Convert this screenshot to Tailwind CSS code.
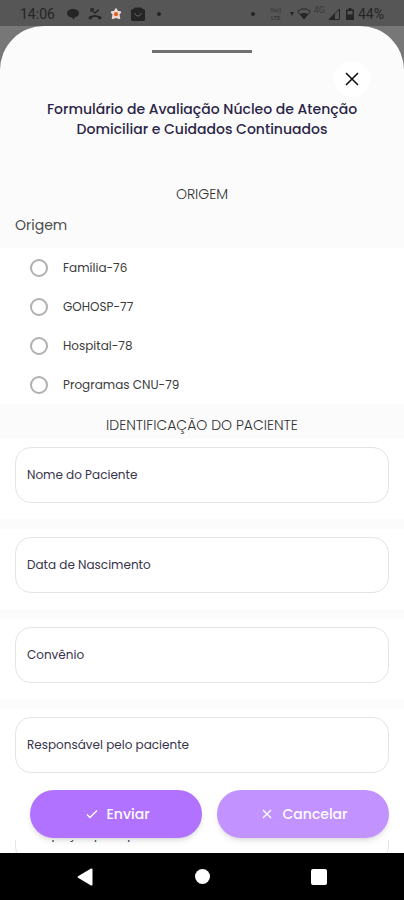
<!DOCTYPE html>
<html lang="pt-BR">
<head>
  <meta charset="UTF-8" />
  <meta name="viewport" content="width=device-width, initial-scale=1.0"/>
  <title>Formulário de Avaliação</title>
  <script src="https://cdn.jsdelivr.net/npm/@tailwindcss/browser@4"></script>
</head>
<body class="bg-[#777777] font-['Poppins','Inter',sans-serif]">
  <div class="flex flex-col h-screen overflow-hidden">

    <!-- Status bar -->
    <header class="flex items-center justify-between h-[26px] shrink-0 bg-[#565656] px-5 pt-px text-[#252525] font-['Roboto',sans-serif]">
      <div class="flex items-center">
        <span class="text-sm w-9">14:06</span>
        <svg class="w-3 h-3 ml-[11px]" viewBox="0 0 12 12" fill="currentColor"><path d="M6 1c3.400 0 6 1.700 6 4.200 0 2-1.800 3.500-4 4L6.500 11.500 5 9.400C2 9.200 0 7.500 0 5.200 0 2.700 2.600 1 6 1z"/></svg>
        <svg class="w-[14px] h-3 ml-[9px]" viewBox="0 0 14 12" fill="none" stroke="currentColor"><path d="M3 1l4 4 4-3.500M3 4V1h3" stroke-width="1.300"/><path d="M1.500 10.500C4.500 7 9.500 7 12.500 10.500" stroke-width="1.800"/><path d="M1 10.500l2.500-1.500M13 10.500L10.500 9" stroke-width="3"/></svg>
        <svg class="w-3 h-3 ml-2" viewBox="0 0 12 12"><path d="M6 .5l1.700 2.800 3.300.7-2 2.700.8 4L6 9.500 2.200 10.700l.8-4L1 4l3.300-.7z" fill="#f1dcd4" stroke="#f1dcd4"/><circle cx="6" cy="6.200" r="2.100" fill="#e2622e"/></svg>
        <svg class="w-[14px] h-[14px] ml-[9px]" viewBox="0 0 14 14"><path d="M2 2l2-1.500h6L12 2l2 1v9.500a1.500 1.500 0 0 1-1.500 1.500h-11A1.500 1.500 0 0 1 0 12.500V3z" fill="#252525"/><path d="M4 6c0 4 6 4 6 0" fill="none" stroke="#666" stroke-width="1"/></svg>
        <span class="w-1 h-1 rounded-full bg-[#252525] ml-3"></span>
      </div>
      <div class="flex items-center">
        <span class="w-1 h-1 rounded-full bg-[#252525] mr-[13px]"></span>
        <span class="flex flex-col gap-px w-4 text-center text-[6px] leading-[7px] text-[#2e2e2e]"><span>Vo))</span><span>LTE</span></span>
        <svg class="w-1 h-1 ml-[6px]" viewBox="0 0 4 4" fill="currentColor"><path d="M0 0h4L2 4z"/></svg>
        <svg class="w-[14px] h-3 ml-[3px]" viewBox="0 0 14 12"><path d="M.8 3.500C4 0 10 0 13.200 3.500L7 11z" fill="none" stroke="#252525"/><path d="M3 6c2.500-1.500 5.500-1.500 8 0l-4 5z" fill="#252525"/></svg>
        <span class="text-[9px] leading-3 h-5 ml-[3px] text-[#3a3a3a]">4G</span>
        <svg class="w-3 h-3 ml-[3px]" viewBox="0 0 12 12"><path d="M1 11.500L11.500 1v10.500z" fill="none" stroke="#252525"/><path d="M1 11.500L7 5.500v6z" fill="#252525"/></svg>
        <svg class="w-2 h-3 ml-[6px]" viewBox="0 0 8 12"><path d="M2.500 0h3v1.500H8V12H0V1.500h2.500z" fill="#252525"/><path d="M1.500 3h5v3.500h-5z" fill="#565656"/></svg>
        <span class="text-sm ml-1">44%</span>
      </div>
    </header>

    <!-- Bottom sheet -->
    <main class="relative flex-1 min-h-0 overflow-hidden rounded-t-[44px] bg-[#fbfbfb]">
      <div class="flex justify-center pt-6">
        <span class="w-[100px] h-[3px] bg-[#707070]"></span>
      </div>
      <div class="flex justify-end pr-[34px] pt-2">
        <button aria-label="Fechar" class="flex items-center justify-center w-9 h-9 rounded-full bg-white">
          <svg class="w-[14px] h-[14px]" viewBox="0 0 14 14" fill="none" stroke="#111111" stroke-width="1.600"><path d="M1 1l12 12M13 1L1 13"/></svg>
        </button>
      </div>
      <h1 class="px-8 pt-[2px] text-center text-sm leading-5 font-medium text-[#2b2547]">Formulário de Avaliação Núcleo de Atenção Domiciliar e Cuidados Continuados</h1>

      <form>
        <h2 class="mt-[45px] text-center text-sm leading-5 font-light text-[#333333]">ORIGEM</h2>
        <fieldset>
          <legend class="px-[15px] pt-[11px] pb-[13px] text-sm leading-5 text-[#4a4a4a]">Origem</legend>
          <div class="bg-white pl-[30px] text-xs text-[#3c3c3c]">
            <label class="flex items-center gap-[15px] h-[39px]"><input type="radio" name="origem" class="appearance-none w-[18px] h-[18px] rounded-full border-2 border-[#b0b0b0] checked:bg-[#b072ff]" />Família-76</label>
            <label class="flex items-center gap-[15px] h-[39px]"><input type="radio" name="origem" class="appearance-none w-[18px] h-[18px] rounded-full border-2 border-[#b0b0b0] checked:bg-[#b072ff]" />GOHOSP-77</label>
            <label class="flex items-center gap-[15px] h-[39px]"><input type="radio" name="origem" class="appearance-none w-[18px] h-[18px] rounded-full border-2 border-[#b0b0b0] checked:bg-[#b072ff]" />Hospital-78</label>
            <label class="flex items-center gap-[15px] h-[39px]"><input type="radio" name="origem" class="appearance-none w-[18px] h-[18px] rounded-full border-2 border-[#b0b0b0] checked:bg-[#b072ff]" />Programas CNU-79</label>
          </div>
        </fieldset>

        <h2 class="pt-[11px] pb-1 text-center text-sm leading-5 font-light text-[#333333]">IDENTIFICAÇÃO DO PACIENTE</h2>
        <div class="flex flex-col gap-[10px]">
          <div class="bg-white px-[15px] pt-2 pb-4">
            <input type="text" aria-label="Nome do Paciente" placeholder="Nome do Paciente" class="block w-full h-14 px-[11px] rounded-2xl border border-[#e4e4e4] text-xs placeholder:text-[#37334a]" />
          </div>
          <div class="bg-white px-[15px] pt-2 pb-4">
            <input type="text" aria-label="Data de Nascimento" placeholder="Data de Nascimento" class="block w-full h-14 px-[11px] rounded-2xl border border-[#e4e4e4] text-xs placeholder:text-[#37334a]" />
          </div>
          <div class="bg-white px-[15px] pt-2 pb-4">
            <input type="text" aria-label="Convênio" placeholder="Convênio" class="block w-full h-14 px-[11px] rounded-2xl border border-[#e4e4e4] text-xs placeholder:text-[#37334a]" />
          </div>
          <div class="bg-white px-[15px] pt-2 pb-4">
            <input type="text" aria-label="Responsável pelo paciente" placeholder="Responsável pelo paciente" class="block w-full h-14 px-[11px] rounded-2xl border border-[#e4e4e4] text-xs placeholder:text-[#37334a]" />
          </div>
          <div class="bg-white px-[15px] pt-2 pb-4">
            <input type="text" aria-label="Ocupação principal" placeholder="Ocupação principal" class="block w-full h-14 px-[11px] rounded-2xl border border-[#e4e4e4] text-xs placeholder:text-[#37334a]" />
          </div>
        </div>
      </form>

      <!-- Floating actions -->
      <div class="absolute inset-x-0 bottom-[13px] flex gap-[15px] bg-white pl-[30px] pr-[15px] pt-4 pb-[2px] text-sm font-medium text-white">
        <button class="flex flex-1 items-center justify-center gap-2 pl-1 h-12 rounded-full bg-[#b072ff] shadow-md">
          <svg class="w-3 h-3" viewBox="0 0 12 12" fill="none" stroke="currentColor" stroke-width="1.400"><path d="M1 6.500L4 9.500 11 2.500"/></svg>
          Enviar
        </button>
        <button class="flex flex-1 items-center justify-center gap-[10px] pl-1 h-12 rounded-full bg-[#c292ff] shadow-md">
          <svg class="w-[10px] h-[10px]" viewBox="0 0 10 10" fill="none" stroke="currentColor" stroke-width="1.400"><path d="M1 1l8 8M9 1L1 9"/></svg>
          Cancelar
        </button>
      </div>
    </main>

    <!-- Navigation bar -->
    <nav class="flex items-center justify-between h-[47px] shrink-0 bg-black px-[77px] text-white">
      <button aria-label="Voltar"><svg class="w-4 h-[18px]" viewBox="0 0 16 18" fill="currentColor"><path d="M1 8.200L14 .6Q15.500 0 15.500 1.500v15q0 1.500-1.500 .9L1 9.800Q0 9 1 8.200z"/></svg></button>
      <button aria-label="Início" class="w-[15px] h-[15px] rounded-full bg-white"></button>
      <button aria-label="Recentes" class="w-4 h-4 rounded-[2px] bg-white"></button>
    </nav>
  </div>
</body>
</html>
